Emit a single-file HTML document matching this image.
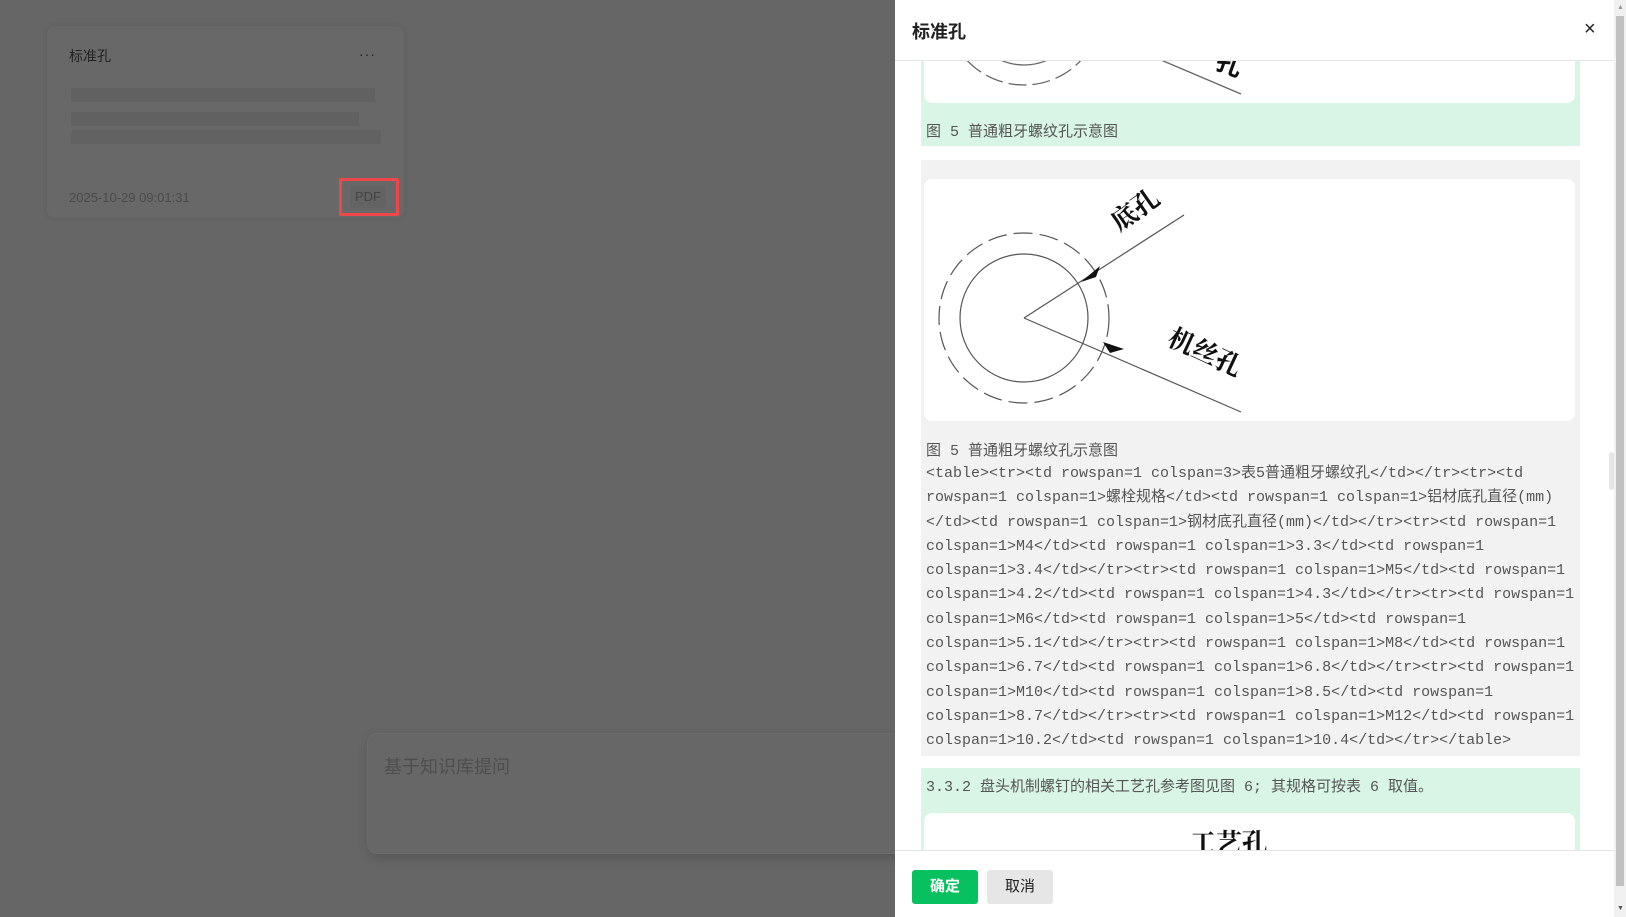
<!DOCTYPE html>
<html><head><meta charset="utf-8"><style>
*{box-sizing:border-box;margin:0;padding:0}
body{width:1626px;height:917px;overflow:hidden;position:relative;background:#666;font-family:"Liberation Sans","Noto Sans CJK SC",sans-serif}
.card{position:absolute;left:47px;top:26px;width:357px;height:192px;background:#686868;border-radius:8px;box-shadow:0 0 6px rgba(0,0,0,.08)}
.blur{position:absolute;left:72px;height:14px;background:#5f5f5f;opacity:.9}
.input{position:absolute;left:367px;top:733px;width:560px;height:121px;background:#676767;border-radius:10px;box-shadow:0 4px 10px rgba(0,0,0,.15);border:1px solid #6c6c6c}
.drawer{position:absolute;left:895px;top:0;width:719px;height:917px;background:#fff}
.hdr{position:absolute;left:0;top:0;width:719px;height:61px;border-bottom:1px solid #e5e5e5;background:#fff;z-index:3}
.ftr{position:absolute;left:0;top:850px;width:719px;height:67px;border-top:1px solid #e5e5e5;background:#fff;z-index:3}
.btn{position:absolute;top:19px;height:34px;width:66px;border-radius:3px;font-size:15px;text-align:center;line-height:34px}
.mono{font-family:"Liberation Mono","Noto Sans CJK SC",monospace;font-size:15px;color:#555}
.code{position:absolute;left:31px;top:462px;line-height:24.3px;white-space:pre}
.sb{position:absolute;left:1614px;top:0;width:12px;height:917px;background:#f1f1f1}
</style></head><body>
<div class="card">
 <div style="position:absolute;left:22px;top:20px;font-size:14px;color:#222">标准孔</div>
 <div style="position:absolute;left:312px;top:20px;font-size:14px;color:#222;letter-spacing:1px">···</div>
 <div class="blur" style="left:24px;top:62px;width:304px;background:#616161"></div>
 <div class="blur" style="left:24px;top:86px;width:288px;background:#606060"></div>
 <div class="blur" style="left:24px;top:104px;width:310px;background:#626262"></div>
 <div style="position:absolute;left:22px;top:164px;font-size:13px;color:#4a4a4a">2025-10-29 09:01:31</div>
 <div style="position:absolute;left:292px;top:152px;width:60px;height:38px;border:3px solid #f0484a;border-radius:2px"></div>
 <div style="position:absolute;left:303px;top:160px;width:36px;height:22px;background:#636363;border-radius:3px;font-size:13px;color:#444;text-align:center;line-height:22px">PDF</div>
</div>
<div class="input"><div style="position:absolute;left:16px;top:19px;font-size:18px;color:#4e4e4e">基于知识库提问</div></div>

<div class="drawer">
 <div class="hdr"><div style="position:absolute;left:17px;top:18px;font-size:18px;font-weight:bold;color:#222">标准孔</div>
  <div style="position:absolute;left:689px;top:18px;font-size:20px;color:#222">×</div></div>
 <div style="position:absolute;left:26px;top:40px;width:659px;height:106px;background:#d9f5e6"></div>
 <div style="position:absolute;left:29px;top:40px;width:651px;height:63px;background:#fff;border-radius:0 0 8px 8px;overflow:hidden">
  <svg width="651" height="63"><g fill="none" stroke="#666" stroke-width="1.3"><circle cx="100" cy="-33" r="58"/><circle cx="100" cy="-33" r="78" stroke-dasharray="18 6"/><line x1="237" y1="20" x2="317" y2="54"/></g><text x="290" y="28" font-size="26" font-weight="bold" fill="#111" transform="rotate(20 290 28)">孔</text></svg></div>
 <div class="mono" style="position:absolute;left:31px;top:120px">图 5 普通粗牙螺纹孔示意图</div>
 <div style="position:absolute;left:26px;top:160px;width:659px;height:596px;background:#f2f2f2"></div>
 <div style="position:absolute;left:29px;top:179px;width:651px;height:242px;background:#fff;border-radius:8px">
  <svg width="651" height="242"><g fill="none" stroke="#555" stroke-width="1.2"><circle cx="100" cy="139" r="64"/><circle cx="100" cy="139" r="85" stroke-dasharray="19 7"/><line x1="100" y1="139" x2="260" y2="36"/><line x1="100" y1="139" x2="317" y2="233"/></g>
  <polygon points="157,103 176,87 172,98" fill="#111"/><polygon points="179,163 200,170 186,174" fill="#111"/>
  <text x="195" y="53" font-size="26" font-family="Noto Serif CJK SC" font-weight="bold" fill="#111" transform="rotate(-35 195 53)">底孔</text>
  <text x="242" y="165" font-size="26" font-family="Noto Serif CJK SC" font-weight="bold" fill="#111" transform="rotate(25 242 165)">机丝孔</text></svg></div>
 <div class="mono" style="position:absolute;left:31px;top:439px">图 5 普通粗牙螺纹孔示意图</div>
 <div class="mono code">&lt;table&gt;&lt;tr&gt;&lt;td rowspan=1 colspan=3&gt;表5普通粗牙螺纹孔&lt;/td&gt;&lt;/tr&gt;&lt;tr&gt;&lt;td
rowspan=1 colspan=1&gt;螺栓规格&lt;/td&gt;&lt;td rowspan=1 colspan=1&gt;铝材底孔直径(mm)
&lt;/td&gt;&lt;td rowspan=1 colspan=1&gt;钢材底孔直径(mm)&lt;/td&gt;&lt;/tr&gt;&lt;tr&gt;&lt;td rowspan=1
colspan=1&gt;M4&lt;/td&gt;&lt;td rowspan=1 colspan=1&gt;3.3&lt;/td&gt;&lt;td rowspan=1
colspan=1&gt;3.4&lt;/td&gt;&lt;/tr&gt;&lt;tr&gt;&lt;td rowspan=1 colspan=1&gt;M5&lt;/td&gt;&lt;td rowspan=1
colspan=1&gt;4.2&lt;/td&gt;&lt;td rowspan=1 colspan=1&gt;4.3&lt;/td&gt;&lt;/tr&gt;&lt;tr&gt;&lt;td rowspan=1
colspan=1&gt;M6&lt;/td&gt;&lt;td rowspan=1 colspan=1&gt;5&lt;/td&gt;&lt;td rowspan=1
colspan=1&gt;5.1&lt;/td&gt;&lt;/tr&gt;&lt;tr&gt;&lt;td rowspan=1 colspan=1&gt;M8&lt;/td&gt;&lt;td rowspan=1
colspan=1&gt;6.7&lt;/td&gt;&lt;td rowspan=1 colspan=1&gt;6.8&lt;/td&gt;&lt;/tr&gt;&lt;tr&gt;&lt;td rowspan=1
colspan=1&gt;M10&lt;/td&gt;&lt;td rowspan=1 colspan=1&gt;8.5&lt;/td&gt;&lt;td rowspan=1
colspan=1&gt;8.7&lt;/td&gt;&lt;/tr&gt;&lt;tr&gt;&lt;td rowspan=1 colspan=1&gt;M12&lt;/td&gt;&lt;td rowspan=1
colspan=1&gt;10.2&lt;/td&gt;&lt;td rowspan=1 colspan=1&gt;10.4&lt;/td&gt;&lt;/tr&gt;&lt;/table&gt;</div>
 <div style="position:absolute;left:714px;top:452px;width:5px;height:38px;background:#e6e6e6;border-radius:3px"></div>
 <div style="position:absolute;left:26px;top:768px;width:659px;height:90px;background:#d9f5e6"></div>
 <div class="mono" style="position:absolute;left:31px;top:775px">3.3.2 盘头机制螺钉的相关工艺孔参考图见图 6; 其规格可按表 6 取值。</div>
 <div style="position:absolute;left:29px;top:813px;width:651px;height:45px;background:#fff;border-radius:8px 8px 0 0">
  <div style="position:absolute;left:266px;top:10px;font-size:26px;font-weight:bold;font-family:'Noto Serif CJK SC',serif;color:#111">工艺孔</div></div>
 <div class="ftr">
  <div class="btn" style="left:17px;background:#07c160;color:#fff;font-weight:bold">确定</div>
  <div class="btn" style="left:92px;background:#e6e6e6;color:#222">取消</div>
 </div>
</div>
<div class="sb"><div style="position:absolute;left:2px;top:16px;width:8px;height:870px;background:#c1c1c1"></div>
 <div style="position:absolute;left:3px;top:4px;font-size:7px;color:#999">▲</div><div style="position:absolute;left:3px;top:905px;font-size:7px;color:#555">▼</div></div>
</body></html>
